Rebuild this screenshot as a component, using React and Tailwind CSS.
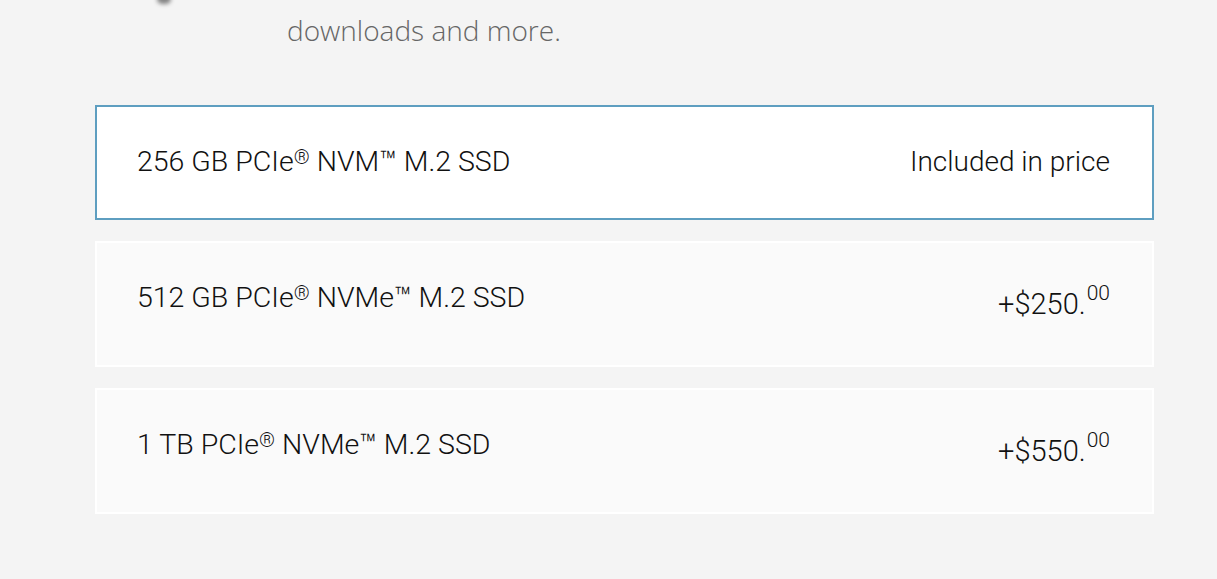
import React from 'react';

// storage options, first one is the selected default
const options = [
    { size: '256 GB', name: 'NVM™ M.2 SSD', price: null },
    { size: '512 GB', name: 'NVMe™ M.2 SSD', price: '250' },
    { size: '1 TB', name: 'NVMe™ M.2 SSD', price: '550' },
];

const OptionCard = ({ option, selected }) => (
    <div
        className={
            selected
                ? 'flex items-start justify-between h-[115px] pl-[40px] pr-[42px] pt-[37px] bg-white border-2 border-[#5e9ec0]'
                : 'flex items-start justify-between h-[126px] pl-[40px] pr-[42px] pt-[37px] bg-[#fafafa] border-2 border-white'
        }
    >
        <span className="text-[28.5px] leading-[36px] font-light text-[#111]">
            {option.size} PCIe<span className="relative top-[-7px] text-[20px] leading-none">®</span> {option.name}
        </span>
        {option.price ? (
            <span className="text-[29px] leading-[36px] font-light text-[#111] mt-[6px]">
                +${option.price}.<sup className="text-[21px] top-[-14px] ml-[1px]">00</sup>
            </span>
        ) : (
            <span className="text-[28px] leading-[36px] font-light text-[#111]">Included in price</span>
        )}
    </div>
);

const App = () => {
    return (
        <div
            className="min-h-screen w-[1217px] h-[579px] overflow-hidden bg-[#f4f4f4]"
            style={{ fontFamily: 'Roboto, "Liberation Sans", sans-serif' }}
        >
            {/* tail of the section above, icon clipped at the top */}
            <div className="relative h-[105px]">
                <div className="absolute left-[157px] top-[-6px] w-[14px] h-[10px] rounded-full bg-[#555] blur-[2px] opacity-70" />
                <p
                    className="pl-[287px] pt-[10px] text-[28px] leading-[40px] font-light text-[#666]"
                    style={{ fontFamily: '"Open Sans", sans-serif' }}
                >
                    downloads and more.
                </p>
            </div>

            <div className="flex flex-col gap-[21px] ml-[95px] w-[1059px]">
                {options.map((o, i) => (
                    <OptionCard key={i} option={o} selected={i === 0} />
                ))}
            </div>
        </div>
    );
};

export default App;
